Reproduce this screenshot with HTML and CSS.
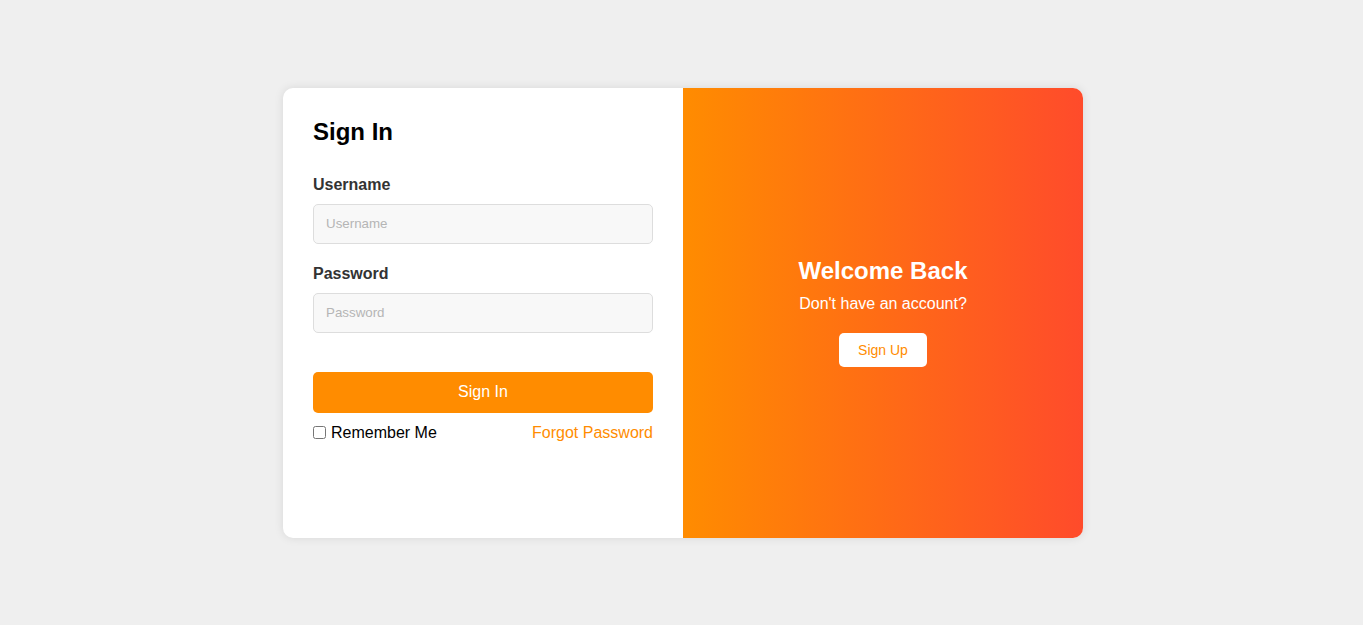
FILE: index.html
```html
<!DOCTYPE html>
<html lang="en">
<head>
<meta charset="utf-8">
<title>Sign In</title>
<link rel="stylesheet" href="styles.css">
</head>
<body>
<div class="page">
  <div class="card">
    <div class="form-panel">
      <h2 class="title">Sign In</h2>
      <div class="group">
        <label class="label" for="u">Username</label>
        <input class="input" id="u" type="text" placeholder="Username">
      </div>
      <div class="group">
        <label class="label" for="p">Password</label>
        <input class="input" id="p" type="password" placeholder="Password">
      </div>
      <button class="btn-primary">Sign In</button>
      <div class="options">
        <label class="remember"><input type="checkbox" class="check">Remember Me</label>
        <a class="forgot" href="#">Forgot Password</a>
      </div>
    </div>
    <div class="welcome-panel">
      <h2 class="welcome-title">Welcome Back</h2>
      <p class="welcome-text">Don't have an account?</p>
      <button class="btn-light">Sign Up</button>
    </div>
  </div>
</div>
</body>
</html>
```
FILE: styles.css
```css
* { box-sizing: border-box; }
html, body { margin: 0; padding: 0; }
body {
  background: #efefef;
  font-family: "Liberation Sans", Arial, sans-serif;
}
.page {
  min-height: 625px;
  display: flex;
  align-items: center;
  justify-content: center;
  padding-left: 3px;
}
.card {
  width: 800px;
  height: 450px;
  display: flex;
  background: #fff;
  border-radius: 10px;
  overflow: hidden;
  box-shadow: 0 0 10px rgba(0,0,0,0.1);
}
.form-panel {
  width: 400px;
  padding: 30px;
}
.title {
  margin: 0 0 30px;
  font-size: 24px;
  font-weight: bold;
  color: #000;
}
.group { margin-bottom: 21px; }
.label {
  display: block;
  font-size: 16px;
  font-weight: bold;
  color: #333;
  margin-bottom: 10px;
}
.input {
  display: block;
  width: 100%;
  height: 40px;
  padding: 0 12px;
  border: 1px solid #ddd;
  border-radius: 5px;
  background: #f8f8f8;
  font-family: "Liberation Sans", Arial, sans-serif;
  font-size: 13.33px;
  outline: none;
}
.input::placeholder { color: #b5b5b5; }
.btn-primary {
  display: block;
  width: 100%;
  height: 41px;
  margin-top: 39px;
  border: none;
  border-radius: 5px;
  background: #ff8c00;
  color: #fff;
  font-family: "Liberation Sans", Arial, sans-serif;
  font-size: 16px;
}
.options {
  display: flex;
  justify-content: space-between;
  align-items: center;
  margin-top: 11px;
  font-size: 16px;
}
.remember {
  display: flex;
  align-items: center;
  color: #000;
}
.check {
  width: 13px;
  height: 13px;
  margin: 0 5px 0 0;
}
.forgot {
  color: #ff8c00;
  text-decoration: none;
}
.welcome-panel {
  width: 400px;
  display: flex;
  flex-direction: column;
  align-items: center;
  justify-content: center;
  padding-bottom: 2px;
  background: linear-gradient(to right, #ff8c00, #ff4b2b);
  color: #fff;
}
.welcome-title {
  margin: 0 0 10px;
  font-size: 24px;
  font-weight: bold;
}
.welcome-text {
  margin: 0 0 20px;
  font-size: 16px;
}
.btn-light {
  padding: 9px 19px;
  border: none;
  border-radius: 5px;
  background: #fff;
  color: #ff8c00;
  font-family: "Liberation Sans", Arial, sans-serif;
  font-size: 14px;
  line-height: 16px;
}
```
